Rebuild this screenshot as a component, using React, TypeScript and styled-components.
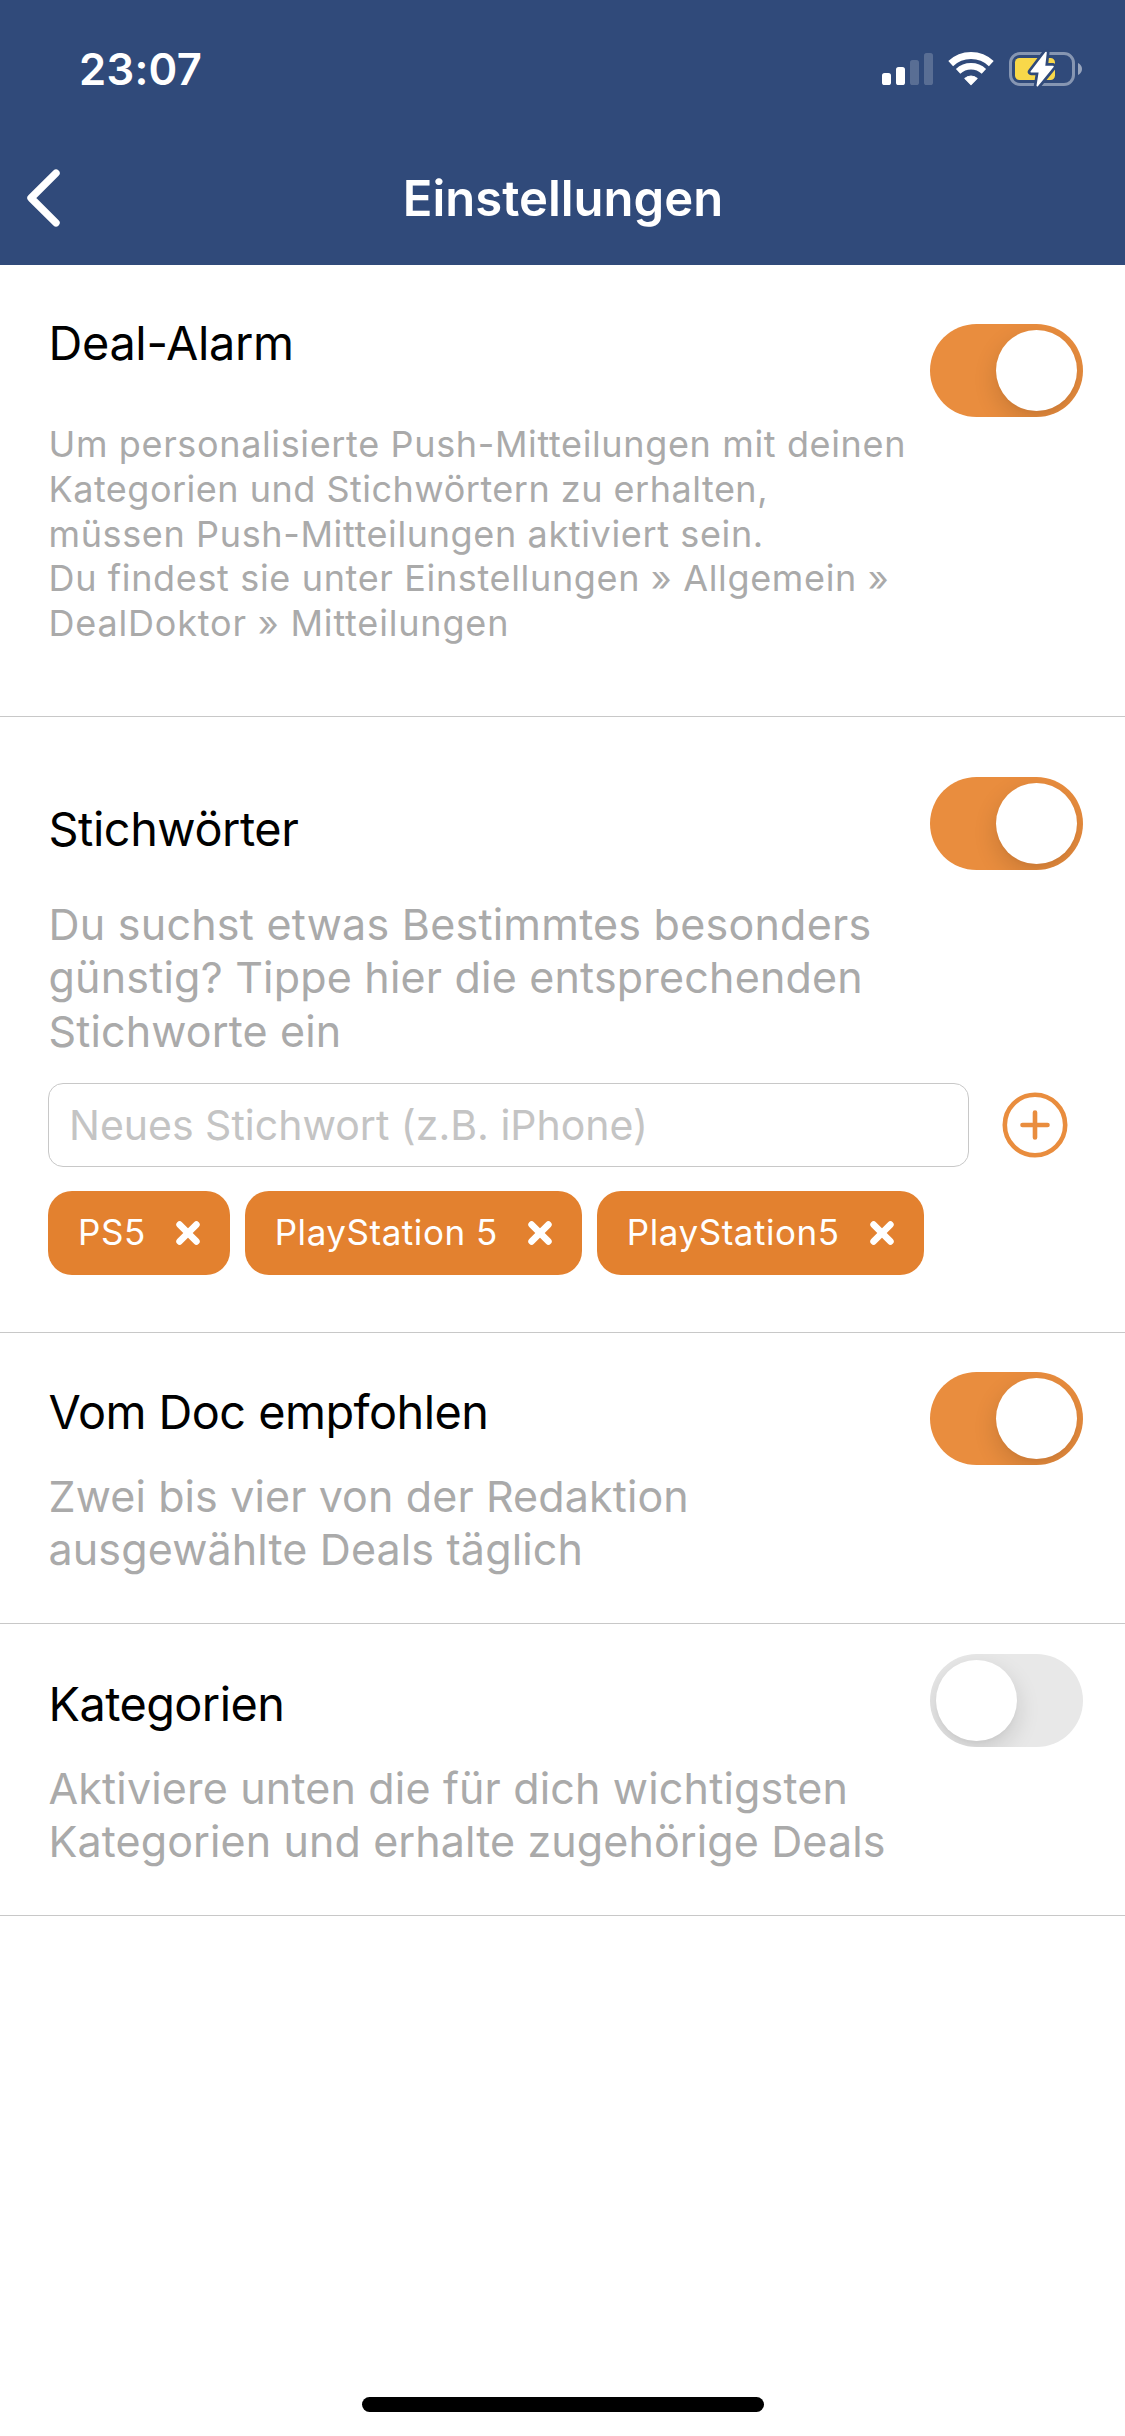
import React, { useState } from 'react';
import styled, { createGlobalStyle } from 'styled-components';

const color = {
  navy: '#304a7a',
  orange: '#e98d3e',
  tag: '#e3812f',
  muted: '#aaaaaa',
  hairline: '#c8c8c8',
  off: '#e8e8e8',
};

const GlobalStyle = createGlobalStyle`
  *, *::before, *::after { box-sizing: border-box; }
  body {
    margin: 0;
    background: #fff;
    font-family: Inter, 'Liberation Sans', sans-serif;
  }
  button {
    font: inherit;
    border: 0;
    padding: 0;
    background: none;
    cursor: pointer;
  }
`;

const Screen = styled.div`
  display: flex;
  flex-direction: column;
  width: 1125px;
  height: 2436px;
  background: #fff;
  overflow: hidden;
`;

const Header = styled.header`
  flex: none;
  height: 265px;
  background: ${color.navy};
  color: #fff;
`;

const StatusBar = styled.div`
  display: flex;
  align-items: center;
  justify-content: space-between;
  height: 138px;
  padding: 0 43px 0 79px;
`;

const Clock = styled.span`
  padding-top: 1px;
  font-size: 43.6px;
  font-weight: 600;
  line-height: 54px;
  letter-spacing: 0.25px;
`;

const StatusIcons = styled.div`
  display: flex;
  align-items: center;
  gap: 15px;
`;

const NavBar = styled.nav`
  display: grid;
  grid-template-columns: 1fr auto 1fr;
  align-items: center;
  height: 127px;
  padding: 0 0 7px 1px;
`;

const BackButton = styled.button`
  display: flex;
  width: 60px;
  height: 60px;
  margin-left: 24px;
  color: #fff;
`;

const NavTitle = styled.h1`
  margin: 0;
  padding-top: 1px;
  font-size: 49px;
  font-weight: 600;
  line-height: 60px;
`;

const Main = styled.main`
  flex: 1;
`;

const Section = styled.section<{ $height: number }>`
  height: ${p => p.$height}px;
  border-bottom: 1px solid ${color.hairline};
`;

const SectionHead = styled.div`
  display: flex;
  align-items: flex-start;
  justify-content: space-between;
  padding: 0 42px 0 48.5px;
`;

const Copy = styled.div<{ $top: number; $gap: number }>`
  display: flex;
  flex-direction: column;
  gap: ${p => p.$gap}px;
  padding-top: ${p => p.$top}px;
`;

const Title = styled.h2<{ $tracking: number }>`
  margin: 0;
  color: #000;
  font-size: 46.8px;
  font-weight: 400;
  line-height: 60px;
  letter-spacing: ${p => p.$tracking}px;
  white-space: nowrap;
`;

const Description = styled.p<{ $size: number; $leading: number }>`
  margin: 0;
  color: ${color.muted};
  font-size: ${p => p.$size}px;
  line-height: ${p => p.$leading}px;
  white-space: nowrap;
`;

const Line = styled.span<{ $tracking: number }>`
  display: block;
  letter-spacing: ${p => p.$tracking}px;
`;

const Track = styled.button<{ $on: boolean; $top: number }>`
  flex: none;
  display: flex;
  align-items: center;
  justify-content: ${p => (p.$on ? 'flex-end' : 'flex-start')};
  width: 153px;
  height: 93px;
  margin-top: ${p => p.$top}px;
  padding: 6px;
  border-radius: 47px;
  background: ${p => (p.$on ? color.orange : color.off)};
  overflow: hidden;
`;

const Knob = styled.span`
  width: 81px;
  height: 81px;
  border-radius: 50%;
  background: #fff;
  box-shadow: 0 9px 24px rgba(0, 0, 0, 0.14), 0 3px 3px rgba(0, 0, 0, 0.02);
`;

const KeywordForm = styled.form`
  display: flex;
  align-items: center;
  gap: 33px;
  padding: 25px 0 0 48px;
`;

const KeywordInput = styled.input`
  width: 921px;
  height: 84px;
  padding: 0 20px;
  border: 1px solid ${color.hairline};
  border-radius: 15px;
  background: #fff;
  color: #000;
  font-family: inherit;
  font-size: 41px;
  outline: none;

  &::placeholder {
    color: #c4c4c4;
    opacity: 1;
  }
`;

const AddButton = styled.button`
  display: flex;
  width: 66px;
  height: 66px;
  color: ${color.orange};
`;

const TagList = styled.ul`
  display: flex;
  gap: 15px;
  margin: 24px 0 0;
  padding: 0 0 0 48px;
  list-style: none;
`;

const Tag = styled.li`
  display: flex;
  align-items: center;
  gap: 30px;
  height: 84px;
  padding: 0 30px;
  border-radius: 24px;
  background: ${color.tag};
  color: #fff;
  font-size: 35px;
  letter-spacing: 0.54px;
  white-space: nowrap;
`;

const TagLabel = styled.span`
  padding-bottom: 1.5px;
`;

const RemoveButton = styled.button`
  display: flex;
  color: #fff;
`;

const HomeArea = styled.footer`
  display: flex;
  justify-content: center;
  padding-bottom: 24px;
`;

const HomeIndicator = styled.div`
  width: 402px;
  height: 15px;
  border-radius: 8px;
  background: #000;
`;

const SignalIcon = () => (
  <svg width="51" height="36" viewBox="0 0 51 36" fill="#fff">
    <rect x="0" y="22" width="9" height="12" rx="2.6" />
    <rect x="14" y="16" width="9" height="18" rx="2.6" />
    <rect x="28" y="9" width="9" height="25" rx="2.6" opacity="0.2" />
    <rect x="42" y="2" width="9" height="32" rx="2.6" opacity="0.2" />
  </svg>
);

const WifiIcon = () => (
  <svg width="46" height="36" viewBox="0 0 46 36" fill="none" stroke="#fff">
    <path d="M2.7 12.6a29.5 29.5 0 0 1 40.6 0" strokeWidth="7" />
    <path d="M10.1 20.4a18.8 18.8 0 0 1 25.8 0" strokeWidth="6.4" />
    <path d="M16.9 27.4a9 9 0 0 1 12.2 0L23 33.5Z" fill="#fff" strokeWidth="1.2" strokeLinejoin="round" />
  </svg>
);

const boltPath = 'M41 1.5L26.3 20.8h8.200L32.300 34.700L48 15.600h-8.600Z';

const BatteryIcon = () => (
  <svg width="73" height="36" viewBox="4 0 73 36" fill="none" overflow="visible">
    <rect x="5.5" y="2.5" width="63" height="31" rx="9.5" stroke="#fff" strokeOpacity="0.42" strokeWidth="3" />
    <path d="M73 12c2.4 1 4 3.4 4 6s-1.6 5-4 6Z" fill="#fff" fillOpacity="0.5" />
    <rect x="10" y="7" width="40" height="22" rx="4.5" fill="#f8d84a" />
    <path d={boltPath} fill={color.navy} stroke={color.navy} strokeWidth="7" strokeLinejoin="round" />
    <path d={boltPath} fill="#fff" stroke="#fff" strokeWidth="1.6" strokeLinejoin="round" />
  </svg>
);

const BackIcon = () => (
  <svg width="40" height="60" viewBox="0 0 40 60" fill="none" stroke="currentColor" strokeWidth="7.4" strokeLinecap="round" strokeLinejoin="round">
    <path d="M31 5.2L6 30L31 54.8" />
  </svg>
);

const PlusCircleIcon = () => (
  <svg width="66" height="66" viewBox="0 0 66 66" fill="none" stroke="currentColor" strokeWidth="4.6" strokeLinecap="round">
    <circle cx="33" cy="33" r="30.2" />
    <path d="M33 20.5v25M20.5 33h25" />
  </svg>
);

const CrossIcon = () => (
  <svg width="24" height="24" viewBox="0 0 24 24" fill="none" stroke="currentColor" strokeWidth="6.6" strokeLinecap="round">
    <path d="M3.6 3.6l16.8 16.8M20.4 3.6L3.6 20.4" />
  </svg>
);

interface ToggleProps {
  label: string;
  initial: boolean;
  top: number;
}

function Toggle({ label, initial, top }: ToggleProps) {
  const [on, setOn] = useState(initial);
  return (
    <Track type="button" role="switch" aria-checked={on} aria-label={label} $on={on} $top={top} onClick={() => setOn(!on)}>
      <Knob />
    </Track>
  );
}

interface Setting {
  title: string;
  tracking: number;
  lines: [string, number][];
  size: number;
  leading: number;
  height: number;
  top: number;
  gap: number;
  toggleTop: number;
  on: boolean;
  keywords?: boolean;
}

const settings: Setting[] = [
  {
    title: 'Deal-Alarm',
    tracking: -0.31,
    lines: [
      ['Um personalisierte Push-Mitteilungen mit deinen', 0.64],
      ['Kategorien und Stichwörtern zu erhalten,', 0.5],
      ['müssen Push-Mitteilungen aktiviert sein.', 0.63],
      ['Du findest sie unter Einstellungen » Allgemein »', 0.65],
      ['DealDoktor » Mitteilungen', 0.82],
    ],
    size: 36,
    leading: 44.75,
    height: 452,
    top: 48,
    gap: 49,
    toggleTop: 59,
    on: true,
  },
  {
    title: 'Stichwörter',
    tracking: -0.44,
    lines: [
      ['Du suchst etwas Bestimmtes besonders', 0.24],
      ['günstig? Tippe hier die entsprechenden', 0.2],
      ['Stichworte ein', 0.14],
    ],
    size: 43,
    leading: 53.3,
    height: 616,
    top: 82,
    gap: 39,
    toggleTop: 60,
    on: true,
    keywords: true,
  },
  {
    title: 'Vom Doc empfohlen',
    tracking: -0.52,
    lines: [
      ['Zwei bis vier von der Redaktion', 0.12],
      ['ausgewählte Deals täglich', 0.14],
    ],
    size: 43,
    leading: 53,
    height: 291,
    top: 49,
    gap: 28,
    toggleTop: 39,
    on: true,
  },
  {
    title: 'Kategorien',
    tracking: -0.54,
    lines: [
      ['Aktiviere unten die für dich wichtigsten', 0.17],
      ['Kategorien und erhalte zugehörige Deals', 0.11],
    ],
    size: 43,
    leading: 53,
    height: 292,
    top: 50,
    gap: 27.5,
    toggleTop: 30,
    on: false,
  },
];

function Keywords() {
  const [tags, setTags] = useState(['PS5', 'PlayStation 5', 'PlayStation5']);
  const [draft, setDraft] = useState('');

  const add = (e: React.FormEvent) => {
    e.preventDefault();
    const value = draft.trim();
    if (value && !tags.includes(value)) setTags([...tags, value]);
    setDraft('');
  };

  return (
    <>
      <KeywordForm onSubmit={add}>
        <KeywordInput placeholder="Neues Stichwort (z.B. iPhone)" value={draft} onChange={e => setDraft(e.target.value)} />
        <AddButton type="submit" aria-label="Hinzufügen">
          <PlusCircleIcon />
        </AddButton>
      </KeywordForm>
      <TagList>
        {tags.map(tag => (
          <Tag key={tag}>
            <TagLabel>{tag}</TagLabel>
            <RemoveButton type="button" aria-label="Entfernen" onClick={() => setTags(tags.filter(t => t !== tag))}>
              <CrossIcon />
            </RemoveButton>
          </Tag>
        ))}
      </TagList>
    </>
  );
}

export default function App() {
  return (
    <>
      <GlobalStyle />
      <Screen>
        <Header>
          <StatusBar>
            <Clock>23:07</Clock>
            <StatusIcons>
              <SignalIcon />
              <WifiIcon />
              <BatteryIcon />
            </StatusIcons>
          </StatusBar>
          <NavBar>
            <BackButton type="button" aria-label="Zurück">
              <BackIcon />
            </BackButton>
            <NavTitle>Einstellungen</NavTitle>
          </NavBar>
        </Header>
        <Main>
          {settings.map(s => (
            <Section key={s.title} $height={s.height}>
              <SectionHead>
                <Copy $top={s.top} $gap={s.gap}>
                  <Title $tracking={s.tracking}>{s.title}</Title>
                  <Description $size={s.size} $leading={s.leading}>
                    {s.lines.map(([text, tracking]) => (
                      <Line key={text} $tracking={tracking}>{text}</Line>
                    ))}
                  </Description>
                </Copy>
                <Toggle label={s.title} initial={s.on} top={s.toggleTop} />
              </SectionHead>
              {s.keywords && <Keywords />}
            </Section>
          ))}
        </Main>
        <HomeArea>
          <HomeIndicator />
        </HomeArea>
      </Screen>
    </>
  );
}
